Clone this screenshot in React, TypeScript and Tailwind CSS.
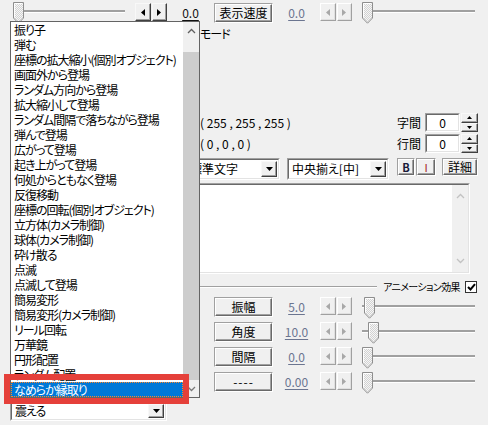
import React from "react";

const FONT =
  "font-['Noto_Sans_CJK_JP','Noto_Sans_CJK_SC',sans-serif] [font-feature-settings:'palt']";

function Thumb() {
  return (
    <svg width="11" height="22" viewBox="0 0 11 22" className="block shrink-0">
      <defs>
        <pattern id="thumbdots" width="2" height="2" patternUnits="userSpaceOnUse">
          <rect width="2" height="2" fill="#f6f6f6" />
          <rect width="1" height="1" fill="#d2d2d2" />
          <rect x="1" y="1" width="1" height="1" fill="#d2d2d2" />
        </pattern>
      </defs>
      <path d="M0.5 0.5 H10.5 V16 L5.5 21.2 L0.5 16 Z" fill="url(#thumbdots)" stroke="#8e8e8e" />
      <path d="M1.5 15.6 V1.5 H9.5" fill="none" stroke="#ffffff" />
    </svg>
  );
}

function Track({ className = "" }: { className?: string }) {
  return <div className={`mt-[8px] h-[3px] bg-[#a0a0a0] border-b border-b-white ${className}`} />;
}

function Slider({ className, pre }: { className: string; pre?: string }) {
  return (
    <div className={`flex items-start shrink-0 ${className}`}>
      {pre && <Track className={pre} />}
      <Thumb />
      <Track className="flex-1" />
    </div>
  );
}

function Spin({ disabled }: { disabled?: boolean }) {
  const fill = disabled ? "#a8a8a8" : "#000000";
  const btn = disabled
    ? "border border-t-white border-l-white border-r-[#a0a0a0] border-b-[#a0a0a0] shadow-[inset_-1px_-1px_0_#e0e0e0]"
    : "border border-t-[#f8f8f8] border-l-[#f8f8f8] border-r-[#404040] border-b-[#404040] shadow-[inset_-1px_-1px_0_#a0a0a0]";
  return (
    <div className="flex gap-[1px] w-[32px] h-[18px] shrink-0">
      <div className={`flex-1 flex items-center justify-center bg-[#f0f0f0] ${btn}`}>
        <svg width="4" height="7" viewBox="0 0 4 7">
          <path d="M4 0L0 3.5L4 7Z" fill={fill} />
        </svg>
      </div>
      <div className={`flex-1 flex items-center justify-center bg-[#f0f0f0] ${btn}`}>
        <svg width="4" height="7" viewBox="0 0 4 7">
          <path d="M0 0L4 3.5L0 7Z" fill={fill} />
        </svg>
      </div>
    </div>
  );
}

function Btn({ children, className = "w-[59px] h-[20px]", textClass = "" }: { children: React.ReactNode; className?: string; textClass?: string }) {
  return (
    <div className={`shrink-0 border border-t-[#a0a0a0] border-l-[#a0a0a0] border-r-white border-b-white ${className}`}>
      <div
        className={`w-full h-full flex items-center justify-center bg-[#f0f0f0] border border-t-white border-l-white border-r-[#696969] border-b-[#696969] shadow-[inset_-1px_-1px_0_#a0a0a0] ${textClass}`}
      >
        {children}
      </div>
    </div>
  );
}

function Val({ children, dim }: { children: React.ReactNode; dim?: boolean }) {
  return (
    <div className="w-[47px] h-[20px] shrink-0 flex items-center justify-center">
      <span className={`underline underline-offset-[2px] ${dim ? "text-[#6b7590]" : "text-[#111111]"}`}>{children}</span>
    </div>
  );
}

function Sunken({ className, children }: { className: string; children: React.ReactNode }) {
  return (
    <div className={`border border-t-[#a0a0a0] border-l-[#a0a0a0] border-r-white border-b-white ${className}`}>
      <div className="w-full h-full flex bg-white border border-t-[#696969] border-l-[#696969] border-r-[#e3e3e3] border-b-[#e3e3e3]">
        {children}
      </div>
    </div>
  );
}

function DownArrowBtn() {
  return (
    <div className="w-[16px] self-stretch m-[1px] flex items-center justify-center bg-[#f0f0f0] border border-t-[#f8f8f8] border-l-[#f8f8f8] border-r-[#404040] border-b-[#404040] shadow-[inset_-1px_-1px_0_#a0a0a0]">
      <svg width="7" height="4" viewBox="0 0 7 4">
        <path d="M0 0H7L3.5 4Z" fill="#000" />
      </svg>
    </div>
  );
}

function Combo({ text, className, textClass = "" }: { text: string; className: string; textClass?: string }) {
  return (
    <Sunken className={className}>
      <div className={`flex-1 flex items-center pl-[3px] whitespace-nowrap overflow-hidden ${textClass}`}>{text}</div>
      <DownArrowBtn />
    </Sunken>
  );
}

function UpDown() {
  const b =
    "flex-1 flex items-center justify-center bg-[#f0f0f0] border border-t-[#f8f8f8] border-l-[#f8f8f8] border-r-[#404040] border-b-[#404040] shadow-[inset_-1px_-1px_0_#a0a0a0]";
  return (
    <div className="flex flex-col w-[17px] h-[19px] shrink-0">
      <div className={b}>
        <svg width="5" height="3" viewBox="0 0 5 3">
          <path d="M0 3H5L2.5 0Z" fill="#000" />
        </svg>
      </div>
      <div className={b}>
        <svg width="5" height="3" viewBox="0 0 5 3">
          <path d="M0 0H5L2.5 3Z" fill="#000" />
        </svg>
      </div>
    </div>
  );
}

function NumBox({ label }: { label: string }) {
  return (
    <div className="flex items-center">
      <span className="w-[24px] mr-[4px]">{label}</span>
      <Sunken className="w-[35px] h-[19px]">
        <div className="flex-1 flex items-center justify-center">0</div>
      </Sunken>
      <div className="ml-[1px]">
        <UpDown />
      </div>
    </div>
  );
}

function Chevron({ up, color }: { up?: boolean; color: string }) {
  return (
    <svg width="9" height="6" viewBox="0 0 9 6">
      <path d={up ? "M1 5L4.5 1.5L8 5" : "M1 1L4.5 4.5L8 1"} fill="none" stroke={color} strokeWidth="1.3" />
    </svg>
  );
}

function ParamRow({ label, value, pre, textClass = "" }: { label: string; value: string; pre?: string; textClass?: string }) {
  return (
    <div className="flex items-start h-[20px]">
      <div className="w-[214px] shrink-0" />
      <Btn textClass={textClass}>{label}</Btn>
      <Val dim>{value}</Val>
      <Spin disabled />
      <div className="ml-[10px]">
        <Slider className="w-[113px]" pre={pre} />
      </div>
    </div>
  );
}

const ITEMS = [
  "振り子",
  "弾む",
  "座標の拡大縮小(個別オブジェクト)",
  "画面外から登場",
  "ランダム方向から登場",
  "拡大縮小して登場",
  "ランダム間隔で落ちながら登場",
  "弾んで登場",
  "広がって登場",
  "起き上がって登場",
  "何処からともなく登場",
  "反復移動",
  "座標の回転(個別オブジェクト)",
  "立方体(カメラ制御)",
  "球体(カメラ制御)",
  "砕け散る",
  "点滅",
  "点滅して登場",
  "簡易変形",
  "簡易変形(カメラ制御)",
  "リール回転",
  "万華鏡",
  "円形配置",
  "ランダム配置",
];

export default function App() {
  return (
    <div className={`relative w-[488px] h-[425px] overflow-hidden bg-[#f0f0f0] text-black text-[12px] leading-[14px] ${FONT}`}>
      <div className="flex flex-col pt-[3px]">
        {/* top row */}
        <div className="flex items-start h-[20px]">
          <div className="w-[135px] shrink-0 pl-[13px] -mt-[1px]">
            <Slider className="w-[112px]" />
          </div>
          <Spin />
          <Val>0.0</Val>
          <Btn>表示速度</Btn>
          <Val dim>0.0</Val>
          <Spin disabled />
          <div className="ml-[10px] -mt-[1px]">
            <Slider className="w-[113px]" />
          </div>
        </div>

        {/* mode label */}
        <div className="mt-[4px] h-[13px] pl-[200px] flex items-center tracking-[-1px] leading-[13px]">モード</div>

        {/* colour rows */}
        <div className="mt-[73px] h-[19px] flex items-center justify-between pl-[200px] pr-[10px]">
          <span className="whitespace-pre">( 255 , 255 , 255 )</span>
          <NumBox label="字間" />
        </div>
        <div className="mt-[2px] h-[19px] flex items-center justify-between pl-[200px] pr-[10px]">
          <span className="whitespace-pre">( 0 , 0 , 0 )</span>
          <NumBox label="行間" />
        </div>

        {/* font row */}
        <div className="mt-[5px] flex items-start pl-[185px]">
          <Combo text="標準文字" className="w-[95px] h-[22px]" />
          <Combo text="中央揃え[中]" className="w-[102px] h-[22px] ml-[7px]" />
          <Btn className="w-[18px] h-[18px] ml-[8px]" textClass="font-bold text-[11px] text-[#1a1a3a]">B</Btn>
          <Btn className="w-[20px] h-[18px] ml-[1px]" textClass="text-[11px] text-[#a01818]">I</Btn>
          <Btn className="w-[36px] h-[18px] ml-[6px]">詳細</Btn>
        </div>

        {/* text area */}
        <Sunken className="mt-[3px] ml-[185px] w-[285px] h-[91px]">
          <div className="flex-1" />
          <div className="w-[16px] bg-[#f0f0f0] flex flex-col justify-between items-center py-[8px]">
            <Chevron up color="#c2c2c2" />
            <Chevron color="#c2c2c2" />
          </div>
        </Sunken>

        {/* group line */}
        <div className="mt-[6px] h-[14px] flex items-center pl-[200px] pr-[11px]">
          <div className="flex-1 h-[2px] bg-[#a0a0a0] border-b border-b-white" />
          <span className="ml-[6px] text-[10px] tracking-[-0.6px] leading-[12px]">アニメーション効果</span>
          <div className="ml-[5px] w-[12px] h-[12px] bg-white border border-[#333333] flex items-center justify-center">
            <svg width="9" height="8" viewBox="0 0 9 8">
              <path d="M1 4L3.5 6.5L8 1.2" fill="none" stroke="#000" strokeWidth="2" />
            </svg>
          </div>
        </div>

        {/* param rows */}
        <div className="mt-[3px] flex flex-col gap-[5px]">
          <ParamRow label="振幅" value="5.0" pre="w-[2px]" />
          <ParamRow label="角度" value="10.0" pre="w-[6px]" />
          <ParamRow label="間隔" value="0.0" />
          <ParamRow label="----" value="0.00" textClass="tracking-[1px]" />
        </div>

        {/* effect combo */}
        <Combo text="震える" className="mt-[9px] ml-[10px] w-[157px] h-[20px]" textClass="tracking-[-1px]" />
      </div>

      {/* dropped-down list */}
      <div className="absolute left-[10px] top-[21px] w-[190px] h-[377px] border border-[#646464] bg-white flex">
        <div className="w-[172px] flex flex-col overflow-hidden tracking-[-1px]">
          {ITEMS.map((t) => (
            <div key={t} className="h-[15px] leading-[15px] shrink-0 flex items-center pl-[3px] whitespace-nowrap">
              {t}
            </div>
          ))}
          <div className="h-[15px] leading-[15px] shrink-0 flex items-center pl-[3px] bg-[#0078d7] text-white outline-1 outline-dotted outline-[#ff8728] -outline-offset-1 whitespace-nowrap">
            なめらか縁取り
          </div>
        </div>
        <div className="w-[16px] bg-[#f0f0f0] flex flex-col">
          <div className="h-[17px] flex items-center justify-center">
            <Chevron up color="#606060" />
          </div>
          <div className="h-[13px]" />
          <div className="flex-1 bg-[#cdcdcd]" />
          <div className="h-[17px] flex items-center justify-center">
            <Chevron color="#7a7a7a" />
          </div>
        </div>
      </div>

      {/* red annotation frame */}
      <div className="absolute left-[4px] top-[374px] w-[185px] h-[30px] border-[6px] border-[#e5403a]" />
    </div>
  );
}
